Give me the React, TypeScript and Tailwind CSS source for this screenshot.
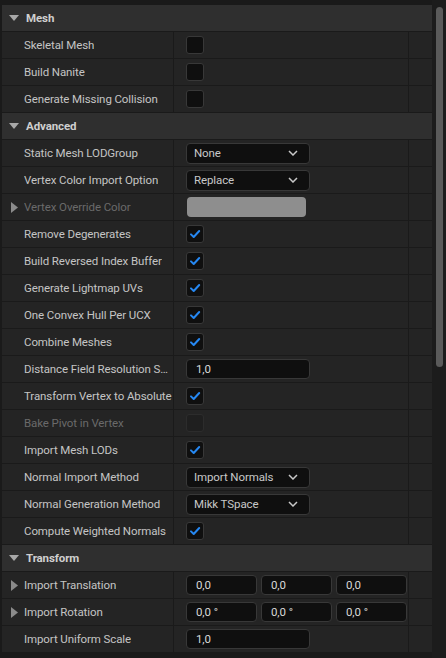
import type { ReactNode } from 'react'

type Row =
  | { kind: 'header'; label: string }
  | {
      kind: 'prop'
      label: string
      value: ReactNode
      expandable?: boolean
      disabled?: boolean
    }

function Check({ checked, disabled }: { checked?: boolean; disabled?: boolean }) {
  return (
    <div
      className={
        disabled
          ? 'flex h-[18px] w-[18px] items-center justify-center rounded-[3px] border border-[#2c2c2c] bg-[#1f1f1f]'
          : 'flex h-[18px] w-[18px] items-center justify-center rounded-[3px] border border-[#383838] bg-[#0f0f0f]'
      }
    >
      {checked ? (
        <svg width="12" height="12" viewBox="0 0 12 12">
          <path
            d="M2 6.4 L4.7 9 L10.2 3"
            fill="none"
            stroke="#2688f2"
            strokeWidth="2"
            strokeLinecap="round"
            strokeLinejoin="round"
          />
        </svg>
      ) : null}
    </div>
  )
}

function Combo({ text }: { text: string }) {
  return (
    <div className="flex h-[21px] w-[124px] items-center justify-between rounded-[4px] border border-[#383838] bg-[#0f0f0f] pl-[7px] pr-[11px] text-[#c8c8c8]">
      <span className="pt-[1px]">{text}</span>
      <svg width="10" height="6" viewBox="0 0 10 6">
        <path d="M1 1 L5 5 L9 1" fill="none" stroke="#c8c8c8" strokeWidth="1.5" />
      </svg>
    </div>
  )
}

function NumBox({ text, width = 'w-[124px]' }: { text: string; width?: string }) {
  return (
    <div
      className={`flex h-[20px] ${width} items-center rounded-[4px] border border-[#383838] bg-[#0f0f0f] pl-[9px] pt-[1px] text-[#d8d8d8]`}
    >
      {text}
    </div>
  )
}

function Vec3({ values }: { values: string[] }) {
  return (
    <div className="flex gap-[4px]">
      {values.map((v, i) => (
        <NumBox key={i} text={v} width="w-[71px]" />
      ))}
    </div>
  )
}

const rows: Row[] = [
  { kind: 'header', label: 'Mesh' },
  { kind: 'prop', label: 'Skeletal Mesh', value: <Check /> },
  { kind: 'prop', label: 'Build Nanite', value: <Check /> },
  { kind: 'prop', label: 'Generate Missing Collision', value: <Check /> },
  { kind: 'header', label: 'Advanced' },
  { kind: 'prop', label: 'Static Mesh LODGroup', value: <Combo text="None" /> },
  { kind: 'prop', label: 'Vertex Color Import Option', value: <Combo text="Replace" /> },
  {
    kind: 'prop',
    label: 'Vertex Override Color',
    expandable: true,
    disabled: true,
    value: <div className="ml-px h-[20px] w-[119px] rounded-[4px] bg-[#8e8e8e]" />,
  },
  { kind: 'prop', label: 'Remove Degenerates', value: <Check checked /> },
  { kind: 'prop', label: 'Build Reversed Index Buffer', value: <Check checked /> },
  { kind: 'prop', label: 'Generate Lightmap UVs', value: <Check checked /> },
  { kind: 'prop', label: 'One Convex Hull Per UCX', value: <Check checked /> },
  { kind: 'prop', label: 'Combine Meshes', value: <Check checked /> },
  { kind: 'prop', label: 'Distance Field Resolution Scale', value: <NumBox text="1,0" /> },
  { kind: 'prop', label: 'Transform Vertex to Absolute', value: <Check checked /> },
  { kind: 'prop', label: 'Bake Pivot in Vertex', disabled: true, value: <Check disabled /> },
  { kind: 'prop', label: 'Import Mesh LODs', value: <Check checked /> },
  { kind: 'prop', label: 'Normal Import Method', value: <Combo text="Import Normals" /> },
  { kind: 'prop', label: 'Normal Generation Method', value: <Combo text="Mikk TSpace" /> },
  { kind: 'prop', label: 'Compute Weighted Normals', value: <Check checked /> },
  { kind: 'header', label: 'Transform' },
  {
    kind: 'prop',
    label: 'Import Translation',
    expandable: true,
    value: <Vec3 values={['0,0', '0,0', '0,0']} />,
  },
  {
    kind: 'prop',
    label: 'Import Rotation',
    expandable: true,
    value: <Vec3 values={['0,0 °', '0,0 °', '0,0 °']} />,
  },
  { kind: 'prop', label: 'Import Uniform Scale', value: <NumBox text="1,0" /> },
]

function HeaderRow({ label }: { label: string }) {
  return (
    <div className="flex h-[27px] items-center border-b border-[#1a1a1a] bg-[#2f2f2f]">
      <svg className="ml-[7px] mr-[7px]" width="10" height="7" viewBox="0 0 10 7">
        <path d="M0 0 L10 0 L5 6 Z" fill="#a8a8a8" />
      </svg>
      <span className="pt-[2px] font-bold text-[#cfcfcf]">{label}</span>
    </div>
  )
}

function PropRow({ row }: { row: Extract<Row, { kind: 'prop' }> }) {
  return (
    <div className="grid h-[27px] grid-cols-[172px_235px_1fr] border-b border-[#1a1a1a] bg-[#242424]">
      <div className="flex min-w-0 items-center border-r border-[#1a1a1a]">
        <div className="flex w-[22px] shrink-0 justify-center pl-[2px]">
          {row.expandable ? (
            <svg width="7" height="11" viewBox="0 0 7 11">
              <path d="M0 0 L7 5.5 L0 11 Z" fill="#8a8a8a" />
            </svg>
          ) : null}
        </div>
        <span
          className={`truncate pt-[2px] ${row.disabled ? 'text-[#6a6a6a]' : 'text-[#c4c4c4]'}`}
        >
          {row.label}
        </span>
      </div>
      <div className="flex items-center border-r border-[#1a1a1a] pl-[12px]">{row.value}</div>
      <div />
    </div>
  )
}

export default function App() {
  return (
    <div
      className="flex h-[658px] w-[446px] overflow-hidden bg-[#1a1a1a] text-[11.5px] tracking-[-0.1px]"
      style={{ fontFamily: 'Roboto, "Noto Sans", sans-serif' }}
    >
      <div className="w-[432px] pl-[2px] pt-[5px]">
        {rows.map((row, i) =>
          row.kind === 'header' ? (
            <HeaderRow key={i} label={row.label} />
          ) : (
            <PropRow key={i} row={row} />
          ),
        )}
      </div>
      <div className="w-[14px] bg-[#1c1c1c] pl-[4px] pt-[7px]">
        <div className="h-[360px] w-[7px] rounded-full bg-[#5a5a5a]" />
      </div>
    </div>
  )
}
